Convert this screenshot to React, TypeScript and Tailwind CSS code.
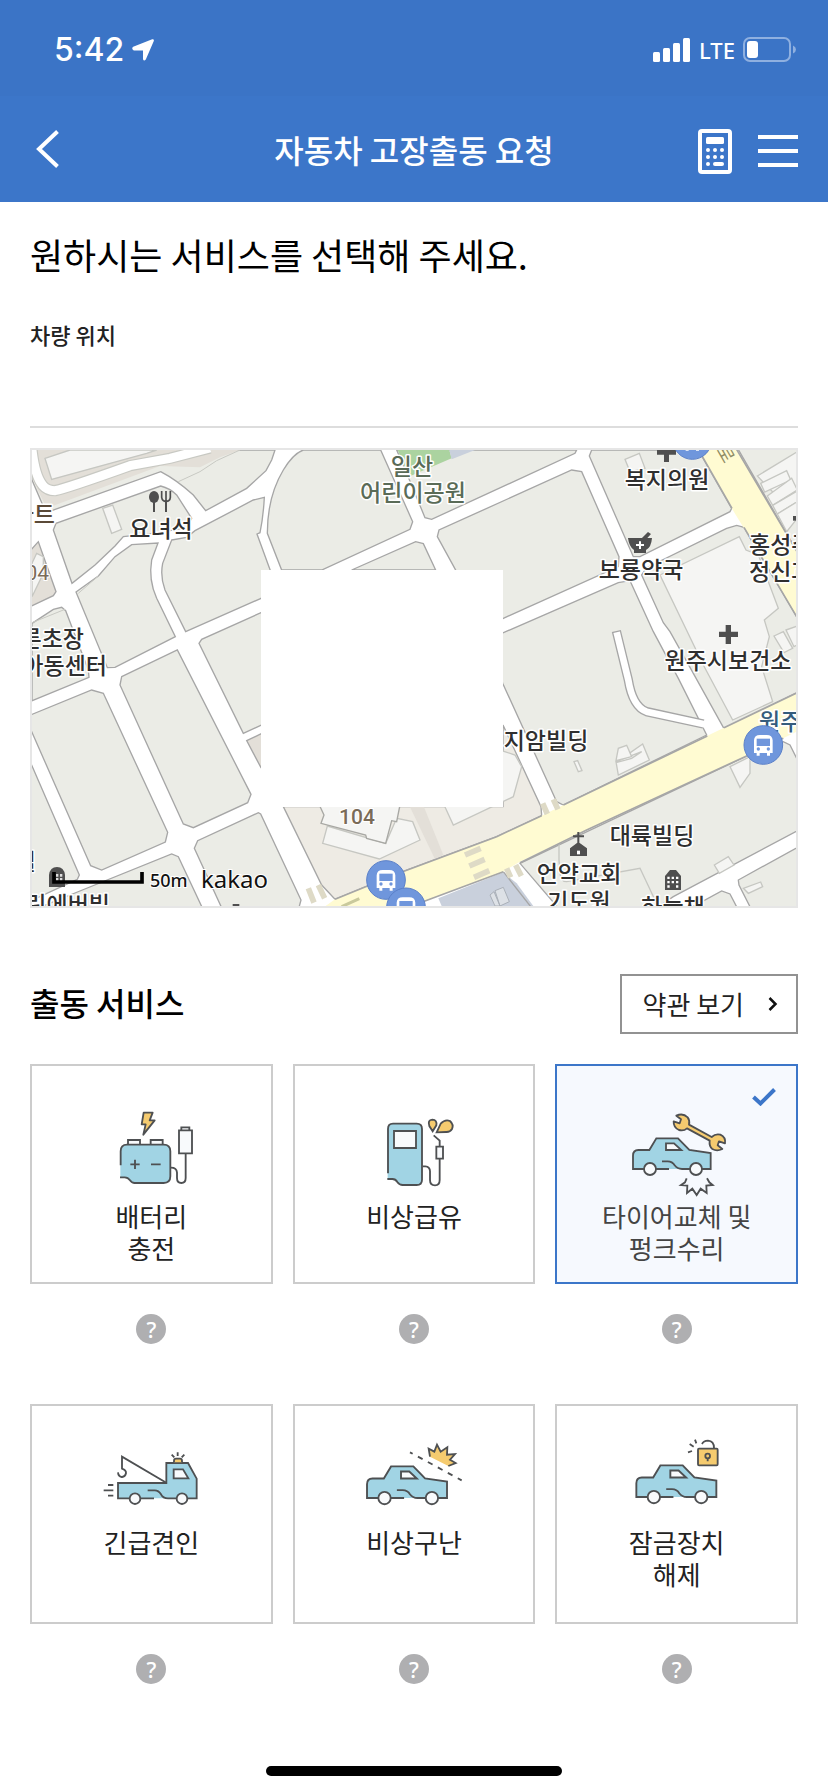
import { useState } from 'react';
import type { ReactNode } from 'react';
import clsx from 'clsx';

const LINE = '#4e5052';
const BLUE = '#a1d4e4';
const YELLOW = '#f5cb6f';
const PALE = '#f8fafc';

function Icon({ viewBox, children }: { viewBox: string; children: ReactNode }) {
  return (
    <svg
      viewBox={viewBox}
      className="h-[94px] w-[104px]"
      fill="none"
      stroke={LINE}
      strokeWidth="5.5"
      aria-hidden="true"
    >
      {children}
    </svg>
  );
}

function Car({ transform }: { transform?: string }) {
  return (
    <g transform={transform}>
      <path
        d="M668 657V617Q668 600 684 600H717L738 565H803L837 600L901 609V657Z"
        fill={BLUE}
        stroke="none"
      />
      <path d="M776 657H668V617Q668 600 684 600H717L738 565H803L837 600L901 609V657H815Q801 657 793 646Q786 634 772 634H755" />
      <path d="M767 580H791L813 600H767Z" fill={PALE} />
      <circle cx="719" cy="657" r="18" fill={PALE} />
      <circle cx="857" cy="657" r="18" fill={PALE} />
    </g>
  );
}

function BatteryIcon() {
  return (
    <Icon viewBox="238 468 312 282">
      <path d="M325 582V570H361V582M393 582V570H429V582" fill={PALE} />
      <path
        d="M302 604Q302 584 322 584H432Q452 584 452 604V679Q452 699 432 699H345Q336 699 331 691Q325 682 315 682H302Z"
        fill={BLUE}
        stroke="none"
      />
      <path d="M303 646V604Q303 584 322 584H432Q452 584 452 604V679Q452 699 432 699H345Q336 699 331 691Q325 682 315 682H301" />
      <path d="M332 643H360M346 629V657M394 643H423" />
      <path d="M454 653Q471 653 472 668V684Q472 699 485 699Q498 699 498 684V612" />
      <path d="M478 541H517V610H478ZM485 540V532H509V540" fill={PALE} />
      <path d="M372 488H399L390 511H405L371 554L378 523H366Z" fill={YELLOW} strokeLinejoin="round" />
    </Icon>
  );
}

function FuelIcon() {
  return (
    <Icon viewBox="1026 468 312 282">
      <path
        d="M1103 537Q1103 521 1119 521H1190Q1206 521 1206 537V689Q1206 705 1190 705H1148Q1138 705 1132 696Q1127 687 1117 687H1103Z"
        fill={BLUE}
        stroke="none"
      />
      <path d="M1104 670V537Q1104 521 1119 521H1190Q1206 521 1206 537V689Q1206 705 1190 705H1148Q1138 705 1132 696Q1127 687 1117 687H1102" />
      <path d="M1122 543H1188V594H1122Z" fill={PALE} />
      <path d="M1208 649H1216Q1230 650 1230 664V690Q1230 706 1245 706Q1259 706 1259 690V627" />
      <path d="M1249 590H1269V626H1249Z" fill={PALE} />
      <path d="M1259 588V572L1241 556" />
      <path d="M1238 544L1228 528Q1222 510 1237 509Q1252 510 1249 526Z" fill={YELLOW} />
      <path
        d="M1250 547L1262 521Q1275 507 1290 513Q1302 524 1296 537Q1290 547 1278 546Z"
        fill={YELLOW}
      />
    </Icon>
  );
}

function TireIcon() {
  return (
    <Icon viewBox="644 468 312 282">
      <Car />
      <path
        d="M798 497Q818 488 832 502Q839 511 836 524L904 561Q916 550 930 554Q947 562 944 580L926 574L922 586L936 597Q920 605 906 597Q896 590 898 572L830 535Q820 544 806 540Q789 532 790 514L808 520L812 508Z"
        fill={YELLOW}
        strokeLinejoin="round"
      />
      <path d="M829 685L824 697L812 705L831 707L830 729L846 716L859 735L871 716L889 729L888 707L907 705L897 697L890 685" />
    </Icon>
  );
}

function TowIcon() {
  return (
    <Icon viewBox="238 126 312 282">
      <path d="M295 325V279H440V219H505L531 266V325Z" fill={BLUE} stroke="none" />
      <path d="M403 325H295V279H440V219H505L531 266V325H445Q430 325 424 313Q417 301 405 301H384" />
      <path d="M462 238H490L506 265H462Z" fill={PALE} />
      <circle cx="346" cy="326" r="16" fill={PALE} />
      <circle cx="487" cy="326" r="16" fill={PALE} />
      <path d="M440 278L307 200V236Q320 240 319 250Q316 262 306 261Q296 259 295 247" />
      <path d="M265 285H281M252 301H281M265 317H281" />
      <path d="M463 217V212Q463 206 469 206H481Q487 206 487 212V217" fill={YELLOW} />
      <path d="M456 194L464 202M474 187V198M494 194L486 202" />
    </Icon>
  );
}

function RescueIcon() {
  return (
    <Icon viewBox="1026 126 312 282">
      <Car transform="translate(353 -352.7) scale(1.03)" />
      <path d="M1170 187L1325 271" strokeDasharray="9 18 16 18 16 18 16 18 16 18 16 18" />
      <path
        d="M1230 200L1226 176L1243 185L1251 164L1262 185L1282 172L1281 194L1305 192L1290 209L1307 219L1285 228"
        fill={YELLOW}
      />
    </Icon>
  );
}

function UnlockIcon() {
  return (
    <Icon viewBox="644 126 312 282">
      <Car transform="translate(-10 -355.7) scale(1.03)" />
      <path d="M875 162Q880 152 893 152Q911 153 911 174" />
      <rect x="863" y="176" width="59" height="50" rx="3" fill={YELLOW} />
      <circle cx="892" cy="198" r="7" />
      <path d="M892 205V214M854 149L858 160M838 162L850 170M833 187L845 183" />
    </Icon>
  );
}

const services = [
  { id: 'battery', label: ['배터리', '충전'], icon: <BatteryIcon />, pad: 'pt-10' },
  { id: 'fuel', label: ['비상급유'], icon: <FuelIcon />, pad: 'pt-10' },
  { id: 'tire', label: ['타이어교체 및', '펑크수리'], icon: <TireIcon />, pad: 'pt-10' },
  { id: 'tow', label: ['긴급견인'], icon: <TowIcon />, pad: 'pt-[26px]' },
  { id: 'rescue', label: ['비상구난'], icon: <RescueIcon />, pad: 'pt-[26px]' },
  { id: 'unlock', label: ['잠금장치', '해제'], icon: <UnlockIcon />, pad: 'pt-[26px]' },
];

const blocks = [
  'M36 30H765L755 60L738 92L680 145L557 212L520 165Q470 120 422 95L78 218L36 120Z',
  'M100 270L108 250L422 138Q450 145 470 165L515 235L500 262L420 278L310 290L285 318L225 375L156 430Z',
  'M168 456L235 408L285 350L335 314L414 309L395 360Q385 420 410 475L466 590L285 682L262 683Z',
  'M36 550L100 508L125 502L137 512L205 690L207 712L36 782Z',
  'M455 300L500 292L525 272L700 180L733 172Q730 230 720 278L711 282L765 430L723 475L497 575L435 450Q420 410 428 370Z',
  'M850 30H1082L1178 245L1170 268L905 390H785L742 280Q742 170 790 90Q820 40 850 30Z',
  'M1130 30H1670L1665 40L1235 238L1215 233L1165 112Z',
  'M1252 290L1257 270L1655 90L1685 95L1797 350L1795 380L1450 535L1400 560Z',
  'M995 390L1187 305L1210 311L1247 390Z',
  'M1715 30L1708 48L1840 350L1860 350L2130 215L2135 205L2035 30Z',
  'M2150 20H2340V350Z',
  'M1865 405L1880 383L2120 265L2150 256L2172 262L2340 547V754L2112 866L2020 700L1950 575L1930 548Z',
  'M1400 600L1795 428L1830 422L1900 575L1975 715L2060 885L1630 1095L1610 1085L1449 732Z',
  'M1500 1270L2180 948L2290 905L2310 915L2340 975V1168L1960 1370L1900 1410H1620Z',
  'M2340 1218L2155 1320L2157 1335L2195 1410H2340Z',
  'M2000 1410L2105 1353L2130 1362L2155 1410Z',
  'M24 828L215 750L250 760L443 1177L436 1206L245 1290L212 1277L24 850Z',
  'M305 710L472 630L693 1063L683 1088L520 1163L490 1152L300 735Z',
  'M537 610L545 598L723 518H800V820L670 880Z',
  'M24 950L178 1305L172 1318L24 1386Z',
  'M40 1410L150 1365L455 1242L475 1250L550 1410Z',
  'M523 1225L533 1202L715 1118L722 1122L843 1380L835 1410H608Z',
];

const buildings = [
  'M75 55L150 30H410L380 40L95 118Z',
  'M248 205L278 195L305 268L275 280Z',
  'M36 370L50 340L70 350L70 400L36 470Z',
  'M1920 405L2158 290L2178 330L2215 345L2275 505L2233 540L2248 590L2225 680L2258 785L2138 840L2050 675Z',
  'M2212 108L2340 30V140L2262 160Z',
  'M2222 130L2300 92L2312 120L2234 156Z',
  'M2242 168L2315 115L2332 150L2258 196Z',
  'M2258 196L2340 148V180L2272 222Z',
  'M2272 222L2340 180V225L2300 275Z',
  'M2262 588L2290 575L2318 625L2292 638Z',
  'M2298 570L2340 555V610L2322 620Z',
  'M1815 58L1858 40L1875 85L1830 95Z',
  'M1275 1101L1300 1155L1480 1070L1505 980L1485 945L1440 930Z',
  'M1788 965L1865 935L1835 955L1788 968L1868 912L1888 960L1795 1005Z',
  'M1788 962L1795 925L1820 916L1835 950Z',
  'M1662 965L1673 962L1686 992L1675 995Z',
  'M2130 980L2190 950V1000L2160 1042Z',
  'M2083 1275L2125 1250L2142 1275L2098 1300Z',
  'M2170 1345L2222 1326L2228 1340L2185 1360Z',
  'M922 1158L1097 1210L1130 1135L1178 1145L1200 1200L1078 1257L908 1210Z',
];

const crossings = [
  'M1335 1245L1382 1225M1348 1278L1394 1258M1362 1312L1408 1292',
  'M1568 1090L1582 1122M1600 1078L1614 1108',
  'M865 1345L882 1388M895 1335L914 1375',
  'M1460 1285L1472 1312M1487 1275L1504 1308',
];

const buses = [
  [1098, 1320],
  [1158, 1402],
  [2230, 915],
  [2017, 0],
];

type Label = { x: number; y: number; text: string; anchor?: 'start' | 'end'; color?: string };

const labels: Label[] = [
  { x: 380, y: 25, text: '일산', color: '#5a6b57' },
  { x: 381, y: 51, text: '어린이공원', color: '#5a6b57' },
  { x: 129, y: 87, text: '요녀석' },
  { x: 635, y: 38, text: '복지의원' },
  { x: 609, y: 128, text: '보룡약국' },
  { x: 717, y: 103, text: '홍성주', anchor: 'start' },
  { x: 717, y: 130, text: '정신과', anchor: 'start' },
  { x: 696, y: 219, text: '원주시보건소' },
  { x: 52, y: 197, text: '푸른초장', anchor: 'end' },
  { x: 75, y: 224, text: '아동센터', anchor: 'end' },
  { x: 23, y: 73, text: '아파트', anchor: 'end', color: '#5b4a38' },
  { x: 514, y: 299, text: '지암빌딩' },
  { x: 727, y: 280, text: '원주', anchor: 'start', color: '#355c7d' },
  { x: 620, y: 394, text: '대륙빌딩' },
  { x: 547, y: 432, text: '언약교회' },
  { x: 547, y: 460, text: '기도원' },
  { x: 641, y: 465, text: '하늘채' },
  { x: 4, y: 420, text: '빌', anchor: 'end' },
  { x: 78, y: 463, text: '린에버빌', anchor: 'end' },
];

function Map() {
  return (
    <svg viewBox="0 0 764 456" className="block w-full" role="img" aria-label="차량 위치 지도">
      <g transform="scale(.33333) translate(-36 -30)">
        <path d="M36 30H2328V1398H36Z" fill="#fff" />
        <g fill="#ebece6" stroke="#a6a6a6" strokeWidth="4">
          {blocks.map((d) => (
            <path key={d} d={d} />
          ))}
          <path d="M24 340L55 305L108 455L100 467L24 503Z" fill="#e3dfd8" />
          <path d="M680 902L730 878L800 1000L723 983Z" fill="#e3dfd8" />
          <path
            d="M790 1100L905 1335L945 1378L1140 1298L1430 1190L1565 1127L1563 1100L1449 855V1100Z"
            fill="#eeebe4"
          />
        </g>
        <path d="M38 30H660L600 52L540 82L420 78L80 205L38 118Z" fill="#e3dfd8" />
        <path d="M660 30L590 62L540 95L475 125M175 460L235 408M36 548L135 508" stroke="#c8c9c3" strokeWidth="3" fill="none" />
        <path d="M36 30C50 150 85 152 105 152Q140 145 330 77L450 55L570 24" stroke="#c8c9c3" strokeWidth="34" fill="none" />
        <path d="M36 30C50 150 85 152 105 152Q140 145 330 77L450 55L570 24" stroke="#fff" strokeWidth="27" fill="none" />
        <path d="M1133 30H1288L1295 55L1166 110Z" fill="#abd3a0" />
        <path d="M1288 30H1365L1295 58Z" fill="#c9d0dc" />
        <path d="M1170 1101H1212L1270 1245L1245 1258Z" fill="#e3dfd8" />
        <g fill="#f5f5f3" stroke="#c6c7c2" strokeWidth="4">
          {buildings.map((d) => (
            <path key={d} d={d} />
          ))}
          <path
            d="M898 1095L912 1125L903 1150L1037 1185L1040 1195L1097 1210L1115 1142L1130 1145L1140 1095"
            stroke="#a8a8a4"
          />
          <path d="M1617 1195V1260L1620 1300Q1622 1325 1640 1325L1860 1285L1905 1380" fill="none" />
        </g>
        <path d="M1789 573L1825 720Q1838 800 1880 815L2050 852" stroke="#a6a6a6" strokeWidth="28" fill="none" />
        <path d="M1790 577L1825 720Q1838 800 1880 815L2060 854" stroke="#fff" strokeWidth="20" fill="none" />
        <path d="M1255 1375L1450 1297L1490 1330L1540 1398H1265Z" fill="#c9d0dc" />
        <path d="M1410 1365L1422 1355L1440 1398H1425ZM1425 1352L1450 1342L1468 1385L1440 1398Z" fill="#dde1e6" stroke="#aab0b8" strokeWidth="3" />
        <path d="M1450 1295L1540 1410" stroke="#a6a6a6" strokeWidth="4" />

        <path d="M2033 25H2148L2335 340V535L2170 262L2137 208Z" fill="#fffbd2" />
        <path d="M2148 25L2340 350M2172 262L2340 547M2033 25L2136 205" stroke="#a6a6a6" strokeWidth="5" />
        <path
          d="M2340 754L1630 1095L1565 1127L1430 1190L1140 1298L945 1378L900 1410H1140L1215 1383L1450 1295L1500 1265L1700 1170L2175 950L2340 870Z"
          fill="#fffbd2"
        />
        <path
          d="M2340 754L2112 863M2062 888L1630 1095M1565 1127L1430 1190L1140 1298L945 1378M1140 1410L1215 1383L1450 1295M1500 1268L1700 1170L2175 950L2290 895"
          stroke="#a6a6a6"
          strokeWidth="5"
          fill="none"
        />
        <g stroke="#dedac6" strokeWidth="17">
          {crossings.map((d) => (
            <path key={d} d={d} />
          ))}
          <path d="M965 1400L1018 1376" stroke="#c9c99c" strokeWidth="9" />
        </g>
        <path d="M723 390H1449V1101H723Z" fill="#fff" />

        <g fill="#4f4f4f">
          <ellipse cx="402" cy="171" rx="15" ry="18" />
          <path d="M399 180H405V216H399ZM435 180H441V216H435Z" />
          <path d="M425 153V172Q427 184 438 184Q450 184 451 172V153M438 153V185" fill="none" stroke="#4f4f4f" strokeWidth="5" />
          <path d="M1911 28H1968V44H1947V66H1932V44H1911Z" />
          <path d="M2117 555H2133V575H2154V591H2133V612H2117V591H2097V575H2117Z" />
          <path d="M1824 294H1866L1884 276L1893 282L1882 294H1896Q1894 322 1878 330V339H1842V330Q1827 320 1824 294Z" />
          <path d="M1857 304H1863V312H1872V318H1863V327H1857V318H1848V312H1857Z" fill="#fff" />
          <path d="M2319 228H2340V242H2319Z" />
          <path d="M1672 1176H1678V1186H1692V1192H1678V1208L1701 1225V1248H1650V1225L1672 1208V1192H1659V1186H1672Z" />
          <path d="M1935 1350V1308L1950 1290H1968L1983 1308V1350Z" />
          <path d="M87 1341V1305Q90 1281 111 1281Q132 1281 135 1305V1341Z" />
          <path d="M638 1392H658V1400H638Z" />
        </g>
        <path
          d="M1942 1310H1949V1317H1942ZM1955 1310H1962V1317H1955ZM1968 1310H1975V1317H1968ZM1942 1323H1949V1330H1942ZM1955 1323H1962V1330H1955ZM1968 1323H1975V1330H1968ZM1942 1336H1949V1343H1942ZM1968 1336H1975V1343H1968Z"
          fill="#fff"
        />
        <path d="M1671 1232H1680V1243H1671Z" fill="#fff" />
        <path d="M108 1302H115V1310H108ZM120 1302H127V1310H120ZM108 1314H115V1322H108ZM120 1314H127V1322H120Z" fill="#ddd" />
      </g>

      <g
        fontSize="23"
        fontWeight="500"
        textAnchor="middle"
        stroke="#fff"
        strokeWidth="3"
        strokeLinejoin="round"
        paintOrder="stroke"
        fill="#2f2f2f"
      >
        {labels.map((l) => (
          <text key={l.text} x={l.x} y={l.y} textAnchor={l.anchor} fill={l.color}>
            {l.text}
          </text>
        ))}
      </g>
      <g fontFamily="Roboto" fontSize="21" fill="#7a6b58" stroke="#fff" strokeWidth="2" paintOrder="stroke">
        <text x="17" y="130" textAnchor="end">
          104
        </text>
        <text x="325" y="374" textAnchor="middle" fontWeight="500">
          104
        </text>
      </g>
      <text x="684" y="0" fontSize="18" fill="#8f8b62" transform="rotate(60 684 0)">
        로
      </text>

      <g transform="scale(.33333) translate(-36 -30)">
        {buses.map(([x, y]) => (
          <g key={x} transform={`translate(${x} ${y})`}>
            <circle r="58" fill="#6f96dc" stroke="#5a80c8" strokeWidth="3" />
            <path
              d="M-28 24V-14Q-27 -30 -10 -30H10Q27 -30 28 -14V24H20V32H11V24H-11V32H-20V24Z"
              fill="#fff"
            />
            <path d="M-20 -19H20V3H-20Z" fill="#6f96dc" />
            <circle cx="-15" cy="12" r="5" fill="#6f96dc" />
            <circle cx="15" cy="12" r="5" fill="#6f96dc" />
          </g>
        ))}
        <path d="M102 1296V1326H366V1296" fill="none" stroke="#000" strokeWidth="11" />
      </g>
      <g fontFamily="'Noto Sans'" fill="#111" stroke="#fff" strokeWidth="2" paintOrder="stroke">
        <text x="118" y="437" fontSize="18" fontWeight="500">
          50m
        </text>
        <text x="169" y="438" fontSize="24">
          kakao
        </text>
      </g>
    </svg>
  );
}

function StatusBar() {
  return (
    <div className="flex h-24 items-center justify-between bg-[#3b74c6] pt-1 pr-8 pl-[54px]">
      <div className="flex items-center gap-2">
        <span className="font-[Inter] text-[32px] leading-10 font-medium">5:42</span>
        <svg viewBox="0 0 22 22" className="size-[22px]" fill="currentColor" aria-hidden="true">
          <path d="M20.200.2Q22.300-.2 21.800 1.900L13.800 20.400Q12 22.600 11 20.200V11.400H1.800Q-1 9.800 1.200 7.800Z" />
        </svg>
      </div>
      <div className="flex items-center gap-2">
        <svg viewBox="0 0 38 24" className="h-6 w-[38px]" fill="currentColor" aria-hidden="true">
          <rect x="0" y="14" width="7" height="10" rx="1.500" />
          <rect x="10" y="10" width="7" height="14" rx="1.500" />
          <rect x="20" y="5" width="7" height="19" rx="1.500" />
          <rect x="30" y="0" width="7" height="24" rx="1.500" />
        </svg>
        <span className="font-['Noto_Sans'] text-[22px] leading-8 font-medium">LTE</span>
        <svg viewBox="0 0 53 26" className="h-[26px] w-[53px]" aria-hidden="true">
          <rect x="1" y="1" width="46" height="23" rx="6" fill="none" stroke="#8fb0e0" strokeWidth="2" />
          <path d="M50 8.500Q53 10 53 12.500Q53 15 50 16.500Z" fill="#8fb0e0" />
          <rect x="4" y="4" width="11" height="17" rx="3" fill="#fff" />
        </svg>
      </div>
    </div>
  );
}

export default function App() {
  const [selected, setSelected] = useState('tire');
  const [location, setLocation] = useState('');

  return (
    <div className="min-h-screen bg-white font-['Noto_Sans_CJK_KR',sans-serif] text-[#222]">
      <header className="bg-[#3c76c9] text-white">
        <StatusBar />
        <div className="grid h-[106px] grid-cols-[1fr_auto_1fr] items-center px-[30px]">
          <button type="button" aria-label="뒤로" className="justify-self-start pl-1.5">
            <svg viewBox="0 0 23 38" className="h-[38px] w-[23px]" fill="none" stroke="currentColor" strokeWidth="4">
              <path d="M21.500 1.500L3 19L21.500 36.500" />
            </svg>
          </button>
          <h1 className="text-[32px] leading-10 font-medium">자동차 고장출동 요청</h1>
          <div className="flex items-center gap-[26px] justify-self-end pt-1">
            <button type="button" aria-label="계산기">
              <svg viewBox="0 0 34 45" className="h-[45px] w-[34px]" fill="currentColor">
                <rect x="2" y="2" width="30" height="41" rx="2" fill="none" stroke="currentColor" strokeWidth="4" />
                <rect x="8" y="8" width="18" height="7" rx="1.500" />
                <circle cx="10" cy="21" r="2" />
                <circle cx="17" cy="21" r="2" />
                <circle cx="24" cy="21" r="2" />
                <circle cx="10" cy="28" r="2" />
                <circle cx="17" cy="28" r="2" />
                <circle cx="24" cy="28" r="2" />
                <circle cx="10" cy="35" r="2" />
                <rect x="15" y="33" width="11" height="4" rx="2" />
              </svg>
            </button>
            <button type="button" aria-label="메뉴" className="flex flex-col gap-2.5">
              <span className="h-1 w-10 bg-white" />
              <span className="h-1 w-10 bg-white" />
              <span className="h-1 w-10 bg-white" />
            </button>
          </div>
        </div>
      </header>

      <main className="px-[30px] pt-7">
        <h2 className="text-4xl leading-12 text-black">원하시는 서비스를 선택해 주세요.</h2>

        <label htmlFor="location" className="mt-10 block text-[22px] leading-8 font-medium">
          차량 위치
        </label>
        <input
          id="location"
          value={location}
          onChange={(e) => setLocation(e.target.value)}
          className="block h-[78px] w-full border-b-2 border-[#ddd] text-[26px] outline-none"
        />

        <div className="mt-5 border-2 border-[#e6e6e6]">
          <Map />
        </div>

        <div className="mt-[66px] flex items-start justify-between">
          <h2 className="pt-1 text-[32px] leading-12 font-medium text-black">출동 서비스</h2>
          <button
            type="button"
            className="flex h-[60px] items-center gap-6 border-2 border-[#929292] pr-[18px] pl-5 text-[26px] leading-8"
          >
            약관 보기
            <svg viewBox="0 0 10 14" className="h-3.5 w-2.5" fill="none" stroke="#111" strokeWidth="2.5" aria-hidden="true">
              <path d="M1.500 1L7.500 7L1.500 13" />
            </svg>
          </button>
        </div>

        <div className="mt-[30px] grid grid-cols-3 gap-x-5 gap-y-[60px]">
          {services.map((s) => (
            <div key={s.id} className="flex flex-col items-center gap-[30px]">
              <button
                type="button"
                aria-pressed={selected === s.id}
                onClick={() => setSelected(s.id)}
                className={clsx(
                  'relative flex h-[220px] w-full flex-col items-center border-2 text-[26px] leading-8',
                  s.pad,
                  selected === s.id
                    ? 'border-[#3c76c9] bg-[#f6f9fe] text-[#444]'
                    : 'border-[#ccc] bg-white'
                )}
              >
                {s.icon}
                {s.label.map((line) => (
                  <span key={line}>{line}</span>
                ))}
                {selected === s.id && (
                  <svg
                    viewBox="0 0 24 18"
                    className="absolute top-[22px] right-5 h-[18px] w-6"
                    fill="none"
                    stroke="#3c76c9"
                    strokeWidth="4"
                    aria-hidden="true"
                  >
                    <path d="M1.500 9L8.500 15.500L22.500 1.500" />
                  </svg>
                )}
              </button>
              <button
                type="button"
                aria-label={`${s.label.join(' ')} 도움말`}
                className="size-[30px] rounded-full bg-[#afafb1] font-['Noto_Sans'] text-[22px] leading-[30px] font-medium text-white"
              >
                ?
              </button>
            </div>
          ))}
        </div>
      </main>

      <div className="mx-auto mt-[82px] mb-4 h-2.5 w-[296px] rounded-full bg-black" />
    </div>
  );
}
